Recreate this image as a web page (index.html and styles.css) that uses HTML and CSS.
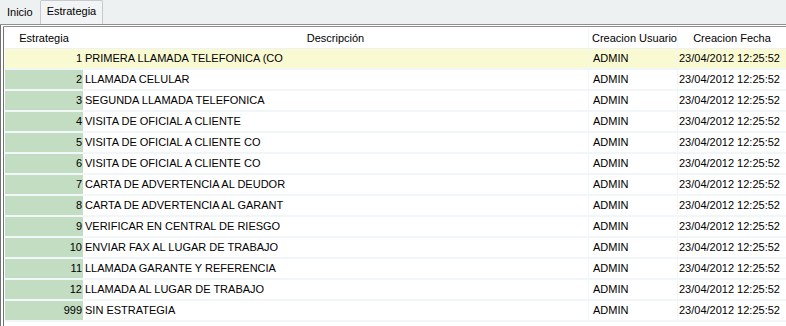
FILE: index.html
```html
<!DOCTYPE html>
<html>
<head>
<meta charset="utf-8">
<link rel="stylesheet" href="styles.css">
</head>
<body>
<div class="tabs">
  <div class="tab">Inicio</div>
  <div class="tab active">Estrategia</div>
</div>
<div class="panel">
  <div class="grid">
    <div class="row head">
      <div class="c1">Estrategia</div>
      <div class="c2">Descripción</div>
      <div class="c3">Creacion Usuario</div>
      <div class="c4">Creacion Fecha</div>
    </div>
    <div class="row sel"><div class="c1">1</div><div class="c2">PRIMERA LLAMADA TELEFONICA (CO</div><div class="c3">ADMIN</div><div class="c4">23/04/2012 12:25:52</div></div>
    <div class="row"><div class="c1">2</div><div class="c2">LLAMADA CELULAR</div><div class="c3">ADMIN</div><div class="c4">23/04/2012 12:25:52</div></div>
    <div class="row"><div class="c1">3</div><div class="c2">SEGUNDA LLAMADA TELEFONICA</div><div class="c3">ADMIN</div><div class="c4">23/04/2012 12:25:52</div></div>
    <div class="row"><div class="c1">4</div><div class="c2">VISITA DE OFICIAL A CLIENTE</div><div class="c3">ADMIN</div><div class="c4">23/04/2012 12:25:52</div></div>
    <div class="row"><div class="c1">5</div><div class="c2">VISITA DE OFICIAL A CLIENTE CO</div><div class="c3">ADMIN</div><div class="c4">23/04/2012 12:25:52</div></div>
    <div class="row"><div class="c1">6</div><div class="c2">VISITA DE OFICIAL A CLIENTE CO</div><div class="c3">ADMIN</div><div class="c4">23/04/2012 12:25:52</div></div>
    <div class="row"><div class="c1">7</div><div class="c2">CARTA DE ADVERTENCIA AL DEUDOR</div><div class="c3">ADMIN</div><div class="c4">23/04/2012 12:25:52</div></div>
    <div class="row"><div class="c1">8</div><div class="c2">CARTA DE ADVERTENCIA AL GARANT</div><div class="c3">ADMIN</div><div class="c4">23/04/2012 12:25:52</div></div>
    <div class="row"><div class="c1">9</div><div class="c2">VERIFICAR EN CENTRAL DE RIESGO</div><div class="c3">ADMIN</div><div class="c4">23/04/2012 12:25:52</div></div>
    <div class="row"><div class="c1">10</div><div class="c2">ENVIAR FAX AL LUGAR DE TRABAJO</div><div class="c3">ADMIN</div><div class="c4">23/04/2012 12:25:52</div></div>
    <div class="row"><div class="c1">11</div><div class="c2">LLAMADA GARANTE Y REFERENCIA</div><div class="c3">ADMIN</div><div class="c4">23/04/2012 12:25:52</div></div>
    <div class="row"><div class="c1">12</div><div class="c2">LLAMADA AL LUGAR DE TRABAJO</div><div class="c3">ADMIN</div><div class="c4">23/04/2012 12:25:52</div></div>
    <div class="row"><div class="c1">999</div><div class="c2">SIN ESTRATEGIA</div><div class="c3">ADMIN</div><div class="c4">23/04/2012 12:25:52</div></div>
  </div>
</div>
</body>
</html>
```
FILE: styles.css
```css
html, body {
  margin: 0;
  padding: 0;
  width: 786px;
  height: 326px;
  overflow: hidden;
  background: #ffffff;
  font-family: "Liberation Sans", Arial, sans-serif;
  font-size: 11px;
  color: #000;
}
.tabs {
  display: flex;
  align-items: flex-end;
  height: 24px;
  background: #eef1f1;
  padding-left: 3px;
  gap: 2px;
  box-sizing: border-box;
}
.tab {
  height: 21px;
  line-height: 18px;
  padding: 0 5px 0 4px;
  box-sizing: border-box;
  color: #000;
}
.tab.active {
  height: 24px;
  line-height: 20px;
  padding: 0 6px 0 6px;
  background: #f2f4f5;
  border: 1px solid #c5cacd;
  border-bottom: none;
  border-radius: 2px 2px 0 0;
  width: 63px;
}
.panel {
  border-top: 3px double #8d8f90;
  border-left: 4px double #707273;
  height: 302px;
  box-sizing: border-box;
  padding-left: 1px;
  padding-top: 1px;
}
.grid {
  display: flex;
  flex-direction: column;
}
.row {
  display: grid;
  grid-template-columns: 78px 505px 89px 1fr;
  height: 21px;
  box-sizing: border-box;
  border-bottom: 2px solid #f1f6f8;
  line-height: 19px;
  white-space: nowrap;
}
.row > div {
  overflow: hidden;
}
.row .c1 {
  background: #c2ddc2;
  text-align: right;
  padding-right: 1px;
}
.row .c2 {
  padding-left: 2px;
}
.row .c3 {
  padding-left: 4px;
  border-left: 1px solid #f1f6f8;
}
.row .c4 {
  padding-left: 1px;
  border-left: 1px solid #f1f6f8;
}
.row.head {
  height: 21px;
  line-height: 20px;
  background: #ffffff;
  border-bottom: 1px solid #eef2f4;
}
.row.head > div {
  overflow: visible;
}
.row.head .c1 {
  background: transparent;
  text-align: center;
  padding: 0;
}
.row.head .c2 {
  text-align: center;
  padding: 0;
}
.row.head .c3 {
  padding-left: 3px;
}
.row.head .c4 {
  text-align: center;
  padding: 0;
}
.row.sel {
  background: #fafad2;
}
.row.sel .c1 {
  background: #fafad2;
}
```
